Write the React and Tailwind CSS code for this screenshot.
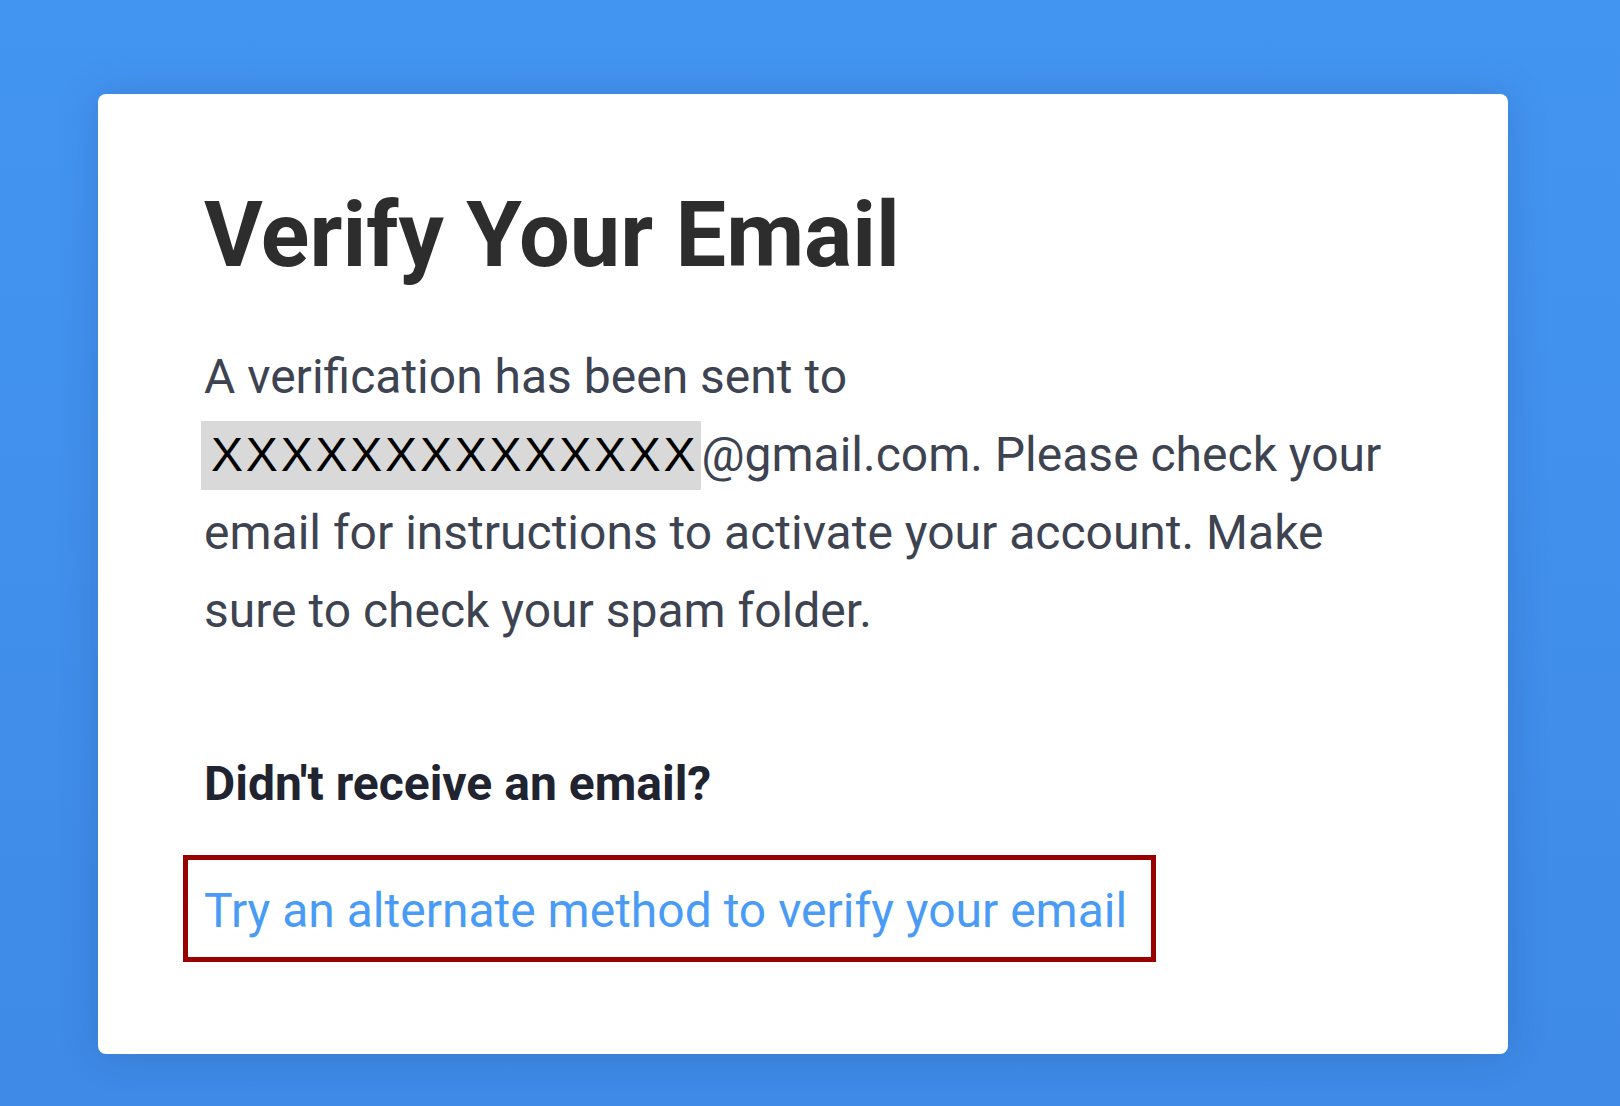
import React from 'react';

export default function App() {
  return (
    <div className="w-[1620px] h-[1106px] overflow-hidden bg-gradient-to-b from-[#4395f2] to-[#3e8ae6] pl-[98px] pt-[94px] font-['Roboto',sans-serif]">
      {/* card */}
      <div className="w-[1410px] bg-white rounded-lg shadow-[0_0_40px_rgba(20,40,90,0.18)] pt-[88px] pb-[92px] px-[106px]">
        <h1 className="text-[90px] leading-[108px] font-bold text-[#2d2d2d] mb-[48px]">Verify Your Email</h1>

        <p className="text-[48px] leading-[78px] text-[#3d4350]">
          A verification has been sent to{' '}
          <span className="-ml-[3px] pl-[10px] pr-[3px] pt-[7px] pb-[9px] bg-[#d9d9d9] text-black text-[48px] leading-none tracking-[2.8px] font-['Liberation_Sans',sans-serif]">
            XXXXXXXXXXXXXX
          </span>
          @gmail.com. Please check your email for instructions to activate your account. Make sure to check your spam folder.
        </p>

        <p className="mt-[95px] text-[48px] leading-[78px] font-bold text-[#1f2430]">Didn't receive an email?</p>

        {/* highlighted link */}
        <div className="mt-[32px] -ml-[21px] w-[973px] border-[5px] border-[#990000] pl-[16px] pt-[12px] pb-[7px]">
          <a href="#" className="text-[48px] leading-[78px] text-[#4a9bf5]">Try an alternate method to verify your email</a>
        </div>
      </div>
    </div>
  );
}
